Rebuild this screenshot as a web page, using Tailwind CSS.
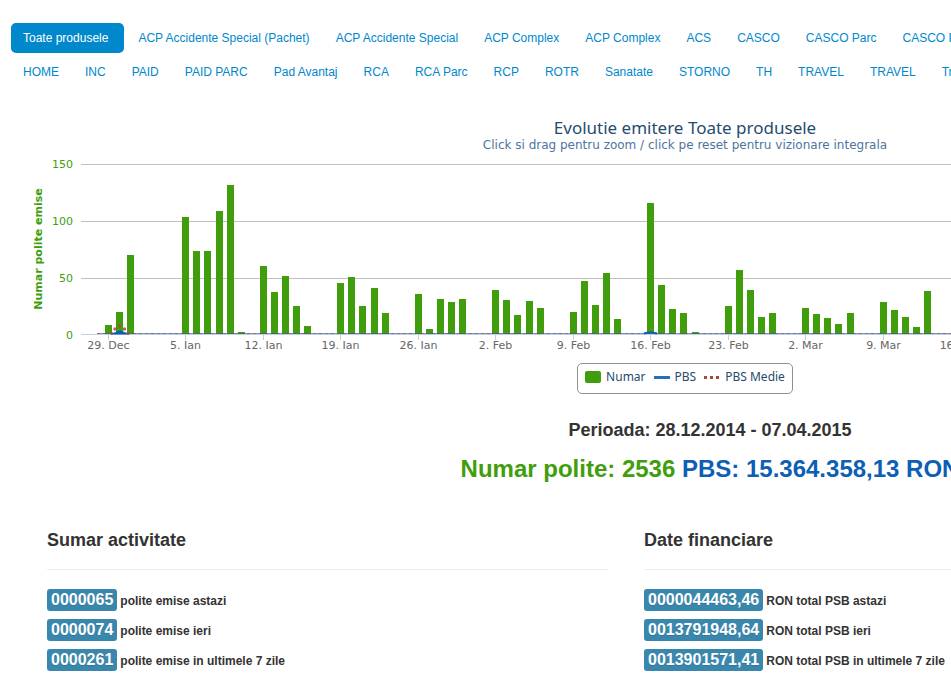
<!DOCTYPE html>
<html lang="ro">
<head>
    <meta charset="UTF-8">
    <meta name="viewport" content="width=device-width, initial-scale=1.0">
    <title>Evolutie emitere</title>
    <script src="https://cdn.jsdelivr.net/npm/@tailwindcss/browser@4"></script>
</head>
<body class="bg-white text-[#333333] overflow-hidden font-['Liberation_Sans',Arial,sans-serif]">
    <div class="min-w-[1420px] pt-[23px]">
        <!-- Product filter -->
        <nav class="ml-[11px] text-xs leading-5 text-[#0088cc] whitespace-nowrap">
            <ul class="flex gap-0.5 mb-1">
                <li><a href="#" class="block pl-3 pr-4 py-[5px] rounded-[5px] bg-[#0088cc] text-white">Toate produsele</a></li>
                <li><a href="#" class="block px-3 py-[5px]">ACP Accidente Special (Pachet)</a></li>
                <li><a href="#" class="block px-3 py-[5px]">ACP Accidente Special</a></li>
                <li><a href="#" class="block px-3 py-[5px]">ACP Complex</a></li>
                <li><a href="#" class="block px-3 py-[5px]">ACP Complex</a></li>
                <li><a href="#" class="block px-3 py-[5px]">ACS</a></li>
                <li><a href="#" class="block px-3 py-[5px]">CASCO</a></li>
                <li><a href="#" class="block px-3 py-[5px]">CASCO Parc</a></li>
                <li><a href="#" class="block px-3 py-[5px]">CASCO Parc</a></li>
            </ul>
            <ul class="flex gap-0.5">
                <li><a href="#" class="block px-3 py-[5px]">HOME</a></li>
                <li><a href="#" class="block px-3 py-[5px]">INC</a></li>
                <li><a href="#" class="block px-3 py-[5px]">PAID</a></li>
                <li><a href="#" class="block px-3 py-[5px]">PAID PARC</a></li>
                <li><a href="#" class="block px-3 py-[5px]">Pad Avantaj</a></li>
                <li><a href="#" class="block px-3 py-[5px]">RCA</a></li>
                <li><a href="#" class="block px-3 py-[5px]">RCA Parc</a></li>
                <li><a href="#" class="block px-3 py-[5px]">RCP</a></li>
                <li><a href="#" class="block px-3 py-[5px]">ROTR</a></li>
                <li><a href="#" class="block px-3 py-[5px]">Sanatate</a></li>
                <li><a href="#" class="block px-3 py-[5px]">STORNO</a></li>
                <li><a href="#" class="block px-3 py-[5px]">TH</a></li>
                <li><a href="#" class="block px-3 py-[5px]">TRAVEL</a></li>
                <li><a href="#" class="block px-3 py-[5px]">TRAVEL</a></li>
                <li><a href="#" class="block px-3 py-[5px]">Travel</a></li>
            </ul>
        </nav>

        <!-- Chart -->
        <section class="mt-8 ml-5 mr-[70px] font-['DejaVu_Sans',sans-serif]">
            <h1 class="text-center text-[17px] leading-[18px] text-[#274b6d] font-['Noto_Sans',sans-serif]">Evolutie emitere Toate produsele</h1>
            <p class="text-center text-xs leading-4 text-[#4d759e]">Click si drag pentru zoom / click pe reset pentru vizionare integrala</p>
            <svg id="chart" class="block w-full mt-px h-[202px] text-[11px]">
                <g stroke="#c0c0c0">
                    <path d="M61 10.5H1200M61 67.5H1200M61 124.5H1200"/>
                </g>
                <g fill="#409e0c" text-anchor="end">
                    <text x="53" y="14">150</text>
                    <text x="53" y="71">100</text>
                    <text x="53" y="128">50</text>
                    <text x="53" y="185">0</text>
                </g>
                <text transform="translate(22 95) rotate(-90)" text-anchor="middle" fill="#409e0c" font-weight="bold">Numar polite emise</text>
                <g id="bars" fill="#409e0c"></g>
                <path d="M61 180.5H1200" stroke="#c0d0e0"/>
                <path d="M77 179.5H1184" stroke="#0d5fb5" stroke-opacity=".6"/>
                <path d="M77 179.5H1184" stroke="#aa4643" stroke-opacity=".6" stroke-dasharray="3 3"/>
                <path d="M91 180C96 179 97 177 100 177S104 179 109 180Z" fill="#0d5fb5" stroke="#0d5fb5"/>
                <path d="M624 179.5Q630 177.500 637 179.500" stroke="#0d5fb5" stroke-width="2" fill="none"/>
                <g fill="#aa4643" fill-opacity=".85">
                    <circle cx="91.500" cy="179" r="1.500"/>
                    <circle cx="95" cy="175" r="1.700"/>
                    <circle cx="99.500" cy="171.500" r="1.700"/>
                    <circle cx="104.500" cy="175" r="1.700"/>
                    <circle cx="108" cy="179" r="1.500"/>
                </g>
                <g id="ticks" fill="#666666" text-anchor="middle"></g>
            </svg>
            <div class="mt-[7px] mx-auto w-fit flex items-center h-[31px] px-[7px] pb-1 border border-[#909090] rounded-[5px] text-xs leading-4 text-[#274b6d] font-['Noto_Sans',sans-serif]">
                <svg width="16" height="12" class="mr-[5px]"><rect width="16" height="12" rx="2" fill="#409e0c"/></svg>
                Numar
                <svg width="16" height="12" class="ml-2 mr-[5px]"><path d="M0 6.500H16" stroke="#0d5fb5" stroke-width="3" stroke-opacity=".9"/></svg>
                PBS
                <svg width="16" height="12" class="ml-2 mr-[5px]"><path d="M0 6.500H16" stroke="#aa4643" stroke-width="3" stroke-dasharray="3 3"/></svg>
                PBS Medie
            </div>
        </section>

        <!-- Totals -->
        <section class="mt-[26px] text-center font-bold">
            <h2 class="text-lg leading-5">Perioada: 28.12.2014 - 07.04.2015</h2>
            <p class="mt-[9px] text-2xl leading-10 text-[#0d5fb5]"><span class="text-[#409e0c]">Numar polite: 2536</span> PBS: 15.364.358,13 RON</p>
        </section>

        <!-- Summary -->
        <div class="mt-[41px] mx-[47px] grid grid-cols-[561px_561px] gap-9 font-bold">
            <section>
                <h3 class="text-lg leading-5">Sumar activitate</h3>
                <hr class="mt-[19px] mb-4 border-[#eeeeee]">
                <ul class="text-xs leading-[30px]">
                    <li class="flex items-baseline gap-[3px]"><span class="px-1 bg-[#3a87ad] rounded-[3px] text-base leading-[22px] text-white text-shadow-2xs">0000065</span> polite emise astazi</li>
                    <li class="flex items-baseline gap-[3px]"><span class="px-1 bg-[#3a87ad] rounded-[3px] text-base leading-[22px] text-white text-shadow-2xs">0000074</span> polite emise ieri</li>
                    <li class="flex items-baseline gap-[3px]"><span class="px-1 bg-[#3a87ad] rounded-[3px] text-base leading-[22px] text-white text-shadow-2xs">0000261</span> polite emise in ultimele 7 zile</li>
                </ul>
            </section>
            <section>
                <h3 class="text-lg leading-5">Date financiare</h3>
                <hr class="mt-[19px] mb-4 border-[#eeeeee]">
                <ul class="text-xs leading-[30px]">
                    <li class="flex items-baseline gap-[3px]"><span class="px-1 bg-[#3a87ad] rounded-[3px] text-base leading-[22px] text-white text-shadow-2xs">0000044463,46</span> RON total PSB astazi</li>
                    <li class="flex items-baseline gap-[3px]"><span class="px-1 bg-[#3a87ad] rounded-[3px] text-base leading-[22px] text-white text-shadow-2xs">0013791948,64</span> RON total PSB ieri</li>
                    <li class="flex items-baseline gap-[3px]"><span class="px-1 bg-[#3a87ad] rounded-[3px] text-base leading-[22px] text-white text-shadow-2xs">0013901571,41</span> RON total PSB in ultimele 7 zile</li>
                </ul>
            </section>
        </div>
    </div>

    <script>
        // One row per week, starting on Monday
        const weeks = [
            { label: '29. Dec', values: [8, 20, 70] },
            { label: '5. Ian', values: [103, 73, 73, 108, 131, 2] },
            { label: '12. Ian', values: [60, 37, 51, 25, 7] },
            { label: '19. Ian', values: [45, 50, 25, 41, 19] },
            { label: '26. Ian', values: [35, 5, 31, 28, 31] },
            { label: '2. Feb', values: [39, 30, 17, 29, 23] },
            { label: '9. Feb', values: [20, 47, 26, 54, 13] },
            { label: '16. Feb', values: [115, 43, 22, 19, 2] },
            { label: '23. Feb', values: [25, 56, 39, 15, 19] },
            { label: '2. Mar', values: [23, 18, 14, 9, 19] },
            { label: '9. Mar', values: [28, 21, 15, 6, 38] },
            { label: '16. Mar', values: [] }
        ];
        const bottom = 180;
        const dayX = (day) => Math.round(73.77 + day * 11.07);

        let bars = '';
        let ticks = '';
        weeks.forEach((week, w) => {
            const monday = 1 + w * 7;
            week.values.forEach((value, i) => {
                const height = Math.floor(value * 1.14 + 0.19);
                bars += `<rect x="${dayX(monday + i)}" y="${bottom - height}" width="7" height="${height}"/>`;
            });
            const x = dayX(monday) + 3.5;
            ticks += `<path d="M${x} 181v5" stroke="#c0d0e0"/><text x="${x}" y="195">${week.label}</text>`;
        });
        document.getElementById('bars').innerHTML = bars;
        document.getElementById('ticks').innerHTML = ticks;
    </script>
</body>
</html>
